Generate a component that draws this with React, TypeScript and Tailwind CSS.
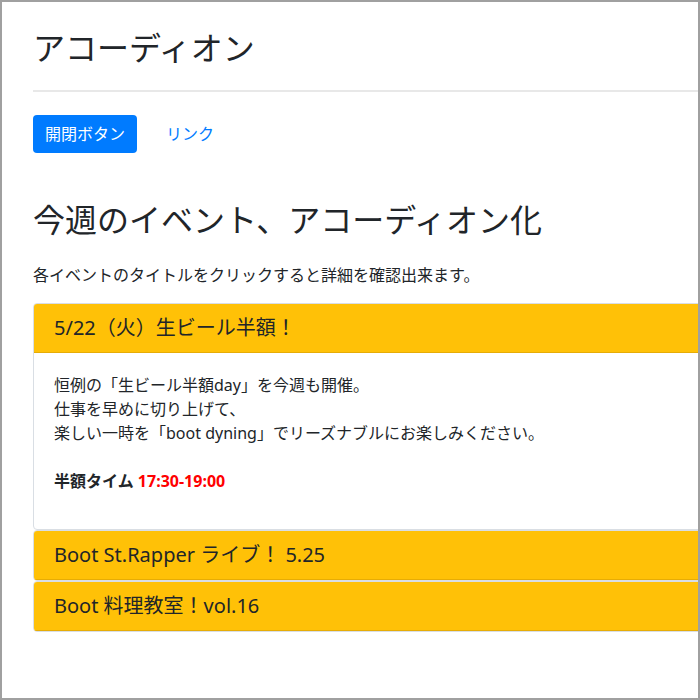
import React from "react";

const font = { fontFamily: '"Noto Sans", "Noto Sans CJK JP", sans-serif' };

function Card({ title, children, last }: { title: string; children?: React.ReactNode; last?: boolean }) {
  return (
    <div className="border border-[#d9dee4] rounded-[4px] overflow-hidden bg-white">
      <div className="bg-[#ffc107] border-b border-[#e6ac06] px-[20px] py-[12px]">
        <h5 className="text-[20px] leading-[24px] text-[#212529] font-normal">{title}</h5>
      </div>
      {children}
    </div>
  );
}

export default function App() {
  return (
    <div className="w-[700px] h-[700px] border-2 border-[#a0a0a0] overflow-hidden bg-white text-[#212529]" style={font}>
      <div className="w-[900px] pl-[31px] pt-[27px]">
        <h1 className="text-[32px] leading-[38px] font-normal">アコーディオン</h1>
        <div className="mt-[23px] h-[2px] bg-[#e8e8e8]" />
        <div className="mt-[23px] flex items-center">
          <button className="h-[38px] px-[12px] bg-[#007bff] text-white text-[16px] leading-[24px] rounded-[4px]">
            開閉ボタン
          </button>
          <span className="ml-[29px] text-[#007bff] text-[16px] leading-[24px]">リンク</span>
        </div>
        <h2 className="mt-[48px] text-[32px] leading-[38px] font-normal">今週のイベント、アコーディオン化</h2>
        <p className="mt-[24px] text-[16px] leading-[24px]">各イベントのタイトルをクリックすると詳細を確認出来ます。</p>
        <div className="mt-[16px] flex flex-col">
          <Card title="5/22（火）生ビール半額！">
            <div className="p-[20px]">
              <p className="mb-[16px] text-[16px] leading-[24px]">
                恒例の「生ビール半額day」を今週も開催。
                <br />
                仕事を早めに切り上げて、
                <br />
                楽しい一時を「boot dyning」でリーズナブルにお楽しみください。
                <br />
                <br />
                <b className="font-bold">半額タイム</b> <b className="font-bold text-[#ff0000]">17:30-19:00</b>
              </p>
            </div>
          </Card>
          <Card title="Boot St.Rapper ライブ！ 5.25" />
          <Card title="Boot 料理教室！vol.16" last />
        </div>
      </div>
    </div>
  );
}
